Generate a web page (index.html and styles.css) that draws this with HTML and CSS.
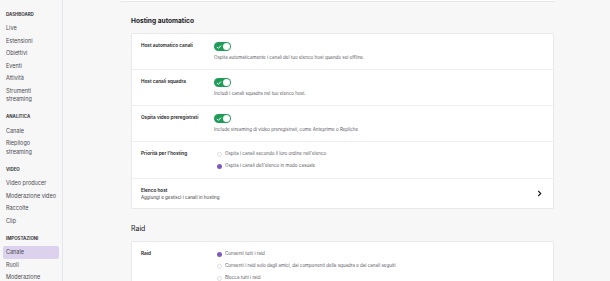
FILE: index.html
```html
<!DOCTYPE html>
<html lang="it">
<head>
    <meta charset="UTF-8">
    <meta name="viewport" content="width=device-width, initial-scale=1.0">
    <title>Canale - Impostazioni</title>
    <link rel="stylesheet" href="styles.css">
</head>
<body>
    <nav class="sidebar">
        <div class="nav-title">Dashboard</div>
        <a class="nav-item">Live</a>
        <a class="nav-item">Estensioni</a>
        <a class="nav-item">Obiettivi</a>
        <a class="nav-item">Eventi</a>
        <a class="nav-item">Attività</a>
        <a class="nav-item">Strumenti<br>streaming</a>
        <div class="nav-title">Analitica</div>
        <a class="nav-item">Canale</a>
        <a class="nav-item">Riepilogo<br>streaming</a>
        <div class="nav-title">Video</div>
        <a class="nav-item">Video producer</a>
        <a class="nav-item">Moderazione video</a>
        <a class="nav-item">Raccolte</a>
        <a class="nav-item">Clip</a>
        <div class="nav-title">Impostazioni</div>
        <a class="nav-item active">Canale</a>
        <a class="nav-item">Ruoli</a>
        <a class="nav-item">Moderazione</a>
    </nav>

    <main class="content">
        <div class="card-end"></div>

        <h2 class="section-title">Hosting automatico</h2>
        <section class="card">
            <div class="row">
                <div class="label">Host automatico canali</div>
                <div class="control">
                    <span class="toggle on"><svg viewBox="0 0 8 8"><polyline points="1.5 4.2 3.2 5.8 6.5 2.3"></polyline></svg></span>
                    <p class="desc">Ospita automaticamente i canali del tuo elenco host quando sei offline.</p>
                </div>
            </div>
            <div class="row">
                <div class="label">Host canali squadra</div>
                <div class="control">
                    <span class="toggle on"><svg viewBox="0 0 8 8"><polyline points="1.5 4.2 3.2 5.8 6.5 2.3"></polyline></svg></span>
                    <p class="desc">Includi i canali squadra nel tuo elenco host.</p>
                </div>
            </div>
            <div class="row">
                <div class="label">Ospita video preregistrati</div>
                <div class="control">
                    <span class="toggle on"><svg viewBox="0 0 8 8"><polyline points="1.5 4.2 3.2 5.8 6.5 2.3"></polyline></svg></span>
                    <p class="desc">Include streaming di video preregistrati, come Anteprime o Repliche</p>
                </div>
            </div>
            <div class="row">
                <div class="label">Priorità per l'hosting</div>
                <div class="control radios">
                    <label class="radio"><span class="dot"></span>Ospita i canali secondo il loro ordine nell'elenco</label>
                    <label class="radio"><span class="dot checked"></span>Ospita i canali dell'elenco in modo casuale</label>
                </div>
            </div>
            <div class="row link-row">
                <div>
                    <div class="label">Elenco host</div>
                    <div class="sub">Aggiungi e gestisci i canali in hosting</div>
                </div>
                <svg class="chevron" viewBox="0 0 6 8"><polyline points="1.5 1 4.5 4 1.5 7"></polyline></svg>
            </div>
        </section>

        <h2 class="section-title light">Raid</h2>
        <section class="card">
            <div class="row">
                <div class="label">Raid</div>
                <div class="control radios">
                    <label class="radio"><span class="dot checked"></span>Consenti tutti i raid</label>
                    <label class="radio"><span class="dot"></span>Consenti i raid solo dagli amici, dai componenti della squadra e dai canali seguiti</label>
                    <label class="radio"><span class="dot"></span>Blocca tutti i raid</label>
                </div>
            </div>
        </section>
    </main>
</body>
</html>
```

FILE: styles.css
```css
body {
    margin: 0;
    height: 281px;
    overflow: hidden;
    display: flex;
    font-family: Inter, "Liberation Sans", sans-serif;
    background-color: #f7f7f8;
    color: #18181b;
}
.sidebar {
    width: 62px;
    flex-shrink: 0;
    padding-top: 3px;
    border-right: 1px solid #e6e6ea;
    background-color: #f7f7f8;
    display: flex;
    flex-direction: column;
}
.nav-title {
    padding: 7.75px 6px 3.25px;
    line-height: 8px;
    font-size: 4.4px;
    font-weight: 700;
    text-transform: uppercase;
    color: #3a3a3d;
}
.nav-item {
    margin: 0 3px;
    padding: 2px 3px;
    line-height: 8.5px;
    font-size: 5.5px;
    color: #4a4a4f;
    white-space: nowrap;
    border-radius: 2px;
}
.nav-item.active {
    background-color: #dcd2ee;
}
.content {
    flex-grow: 1;
    padding: 0 56px 0 68px;
}
.card-end {
    height: 1px;
    background-color: #fff;
    border-bottom: 1px solid #e6e6ea;
    margin-left: -10px;
}
.section-title {
    margin: 14px 0 7px;
    line-height: 10px;
    font-size: 6.6px;
    font-weight: 700;
}
.section-title.light {
    margin-top: 15px;
    font-weight: 400;
    font-size: 7px;
}
.card {
    background-color: #fff;
    border: 1px solid #e9e9ec;
    border-radius: 1px;
}
.row {
    display: flex;
    padding: 8px 9px 8px;
    border-top: 1px solid #efeff1;
}
.row:first-child {
    border-top: none;
}
.label {
    width: 73px;
    flex-shrink: 0;
    line-height: 7px;
    font-size: 4.7px;
    font-weight: 600;
}
.control {
    display: flex;
    flex-direction: column;
    align-items: flex-start;
}
.toggle {
    width: 17px;
    height: 9px;
    border-radius: 5px;
    background-color: #1f9c58;
    display: flex;
    align-items: center;
    justify-content: flex-end;
    padding: 1px;
    box-sizing: border-box;
    position: relative;
}
.toggle::after {
    content: "";
    width: 7px;
    height: 7px;
    border-radius: 50%;
    background-color: #fff;
}
.toggle svg {
    position: absolute;
    left: 2px;
    top: 1.5px;
    width: 6px;
    height: 6px;
    fill: none;
    stroke: #fff;
    stroke-width: 1.3;
    stroke-linecap: round;
    stroke-linejoin: round;
}
.desc {
    margin: 3px 0 0;
    line-height: 7px;
    font-size: 4.5px;
    color: #5c5c66;
}
.radios {
    gap: 4px;
}
.radio {
    display: flex;
    align-items: center;
    gap: 3px;
    padding-left: 3px;
    line-height: 8px;
    font-size: 4.5px;
    color: #5c5c66;
}
.dot {
    width: 5px;
    height: 5px;
    border-radius: 50%;
    border: 0.6px solid #dcdce0;
    box-sizing: border-box;
    background-color: #fff;
}
.dot.checked {
    border: none;
    background-color: #7d5bbe;
}
.link-row {
    justify-content: space-between;
    align-items: center;
    padding: 7px 9px 7px;
}
.link-row .label {
    width: auto;
    line-height: 8px;
}
.sub {
    line-height: 7px;
    font-size: 4.5px;
    color: #3a3a3d;
}
.chevron {
    width: 5px;
    height: 7px;
    margin-right: 2px;
    fill: none;
    stroke: #18181b;
    stroke-width: 1.3;
}
```
